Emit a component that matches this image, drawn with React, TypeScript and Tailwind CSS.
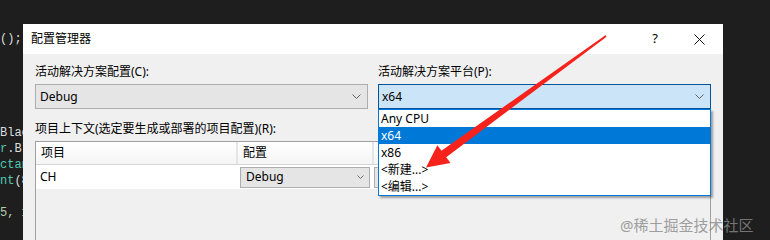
import React from "react";

const ui = { fontFamily: '"Noto Sans", "Noto Sans CJK SC", sans-serif' };
const mono = { fontFamily: '"Liberation Mono", monospace' };

function Chevron({ className = "" }: { className?: string }) {
  return (
    <svg width="9" height="5" viewBox="0 0 9 5" className={className}>
      <polyline points="0.5,0.5 4.5,4.5 8.5,0.5" fill="none" stroke="#606060" strokeWidth="1" />
    </svg>
  );
}

export default function App() {
  const items = ["Any CPU", "x64", "x86", "<新建...>", "<编辑...>"];

  return (
    <div className="relative flex w-[770px] h-[240px] overflow-hidden bg-[#1e1e1e]">
      {/* code behind the dialog */}
      <div className="w-[23px] shrink-0 overflow-hidden text-[12px] leading-[16px] whitespace-nowrap" style={mono}>
        <div className="mt-[31px] text-[#dcdcdc]">();</div>
        <div className="mt-[78px] text-[#dcdcdc]">Blac</div>
        <div>
          <span className="text-[#4ec9b0]">r</span>
          <span className="text-[#dcdcdc]">.Bl</span>
        </div>
        <div className="text-[#4ec9b0]">ctan</div>
        <div>
          <span className="text-[#4ec9b0]">nt</span>
          <span className="text-[#dcdcdc]">(8</span>
        </div>
        <div className="h-[16px]" />
        <div className="text-[#b5cea8]">5, 1</div>
      </div>

      {/* dialog */}
      <div className="mt-[24px] flex w-[700px] shrink-0 flex-col" style={ui}>
        <div className="flex h-[30px] items-center bg-white text-[12px] text-black">
          <span className="ml-[8px] flex-1">配置管理器</span>
          <span className="mr-[36px] text-[13px]">?</span>
          <svg width="11" height="11" viewBox="0 0 11 11" className="mr-[18px]">
            <path d="M0.5 0.5 L10.5 10.5 M10.5 0.5 L0.5 10.5" stroke="#111" strokeWidth="1" />
          </svg>
        </div>

        <div className="flex flex-1 flex-col bg-[#f0f0f0] px-[12px] text-[12px] text-black">
          <div className="mt-[8px] grid grid-cols-2 gap-[10px]">
            <div>
              <div className="h-[20px] leading-[20px]">活动解决方案配置(C):</div>
              <div className="mt-[2px] flex h-[25px] items-center border border-[#adadad] bg-[#e5e5e5] pl-[4px] pr-[6px]">
                <span className="flex-1">Debug</span>
                <Chevron />
              </div>
            </div>
            <div>
              <div className="h-[20px] leading-[20px]">活动解决方案平台(P):</div>
              <div className="relative mt-[2px]">
                <div className="flex h-[25px] items-center border border-[#005499] bg-[#cce4f7] pl-[3px] pr-[6px]">
                  <span className="flex-1">x64</span>
                  <Chevron />
                </div>
                <div className="absolute left-0 right-0 top-[25px] z-10 border border-[#0078d7] bg-white shadow-[2px_2px_2px_rgba(0,0,0,0.35)]">
                  {items.map((it) => (
                    <div
                      key={it}
                      className={
                        "h-[17px] pl-[2px] leading-[17px] " +
                        (it === "x64" ? "bg-[#0078d7] text-white" : "text-black")
                      }
                    >
                      {it}
                    </div>
                  ))}
                </div>
              </div>
            </div>
          </div>

          <div className="mt-[10px] h-[20px] leading-[20px]">项目上下文(选定要生成或部署的项目配置)(R):</div>

          <div className="mt-[2px] flex flex-1 flex-col border-l border-r border-t border-[#a0a0a0] bg-[#f0f0f0]">
            <div className="flex h-[23px] items-center border-b border-[#d5d5d5] bg-gradient-to-b from-white to-[#f5f5f5]">
              <div className="w-[202px] border-r-2 border-[#e5e5e5] pl-[5px] leading-[22px]">项目</div>
              <div className="w-[136px] border-r-2 border-[#e5e5e5] pl-[5px] leading-[22px]">配置</div>
              <div className="flex-1" />
            </div>
            <div className="flex h-[24px] items-center bg-white">
              <div className="w-[202px] pl-[4px]">CH</div>
              <div className="flex w-[136px] items-center pl-[2px] pr-[4px]">
                <div className="flex h-[21px] w-full items-center border border-[#adadad] bg-[#e5e5e5] pl-[5px] pr-[5px]">
                  <span className="flex-1">Debug</span>
                  <svg width="7" height="4" viewBox="0 0 7 4">
                    <polyline points="0.5,0.5 3.5,3.5 6.5,0.5" fill="none" stroke="#707070" strokeWidth="1" />
                  </svg>
                </div>
              </div>
              <div className="flex h-[21px] flex-1 border border-[#adadad] bg-[#e5e5e5]" />
            </div>
          </div>
        </div>
      </div>

      {/* annotation arrow */}
      <svg className="pointer-events-none absolute left-0 top-0 z-20" width="770" height="240" viewBox="0 0 770 240">
        <polygon
          points="605.4,35.3 606.6,36.7 446.2,157.3 450.5,163 426,167.5 437.4,145.2 441.4,150.7"
          fill="#f5231c"
        />
      </svg>

      <div
        className="pointer-events-none absolute left-[620px] top-[215px] z-30 text-[15px] leading-[20px] text-[#8a8a8a] opacity-80"
        style={ui}
      >
        @稀土掘金技术社区
      </div>
    </div>
  );
}
